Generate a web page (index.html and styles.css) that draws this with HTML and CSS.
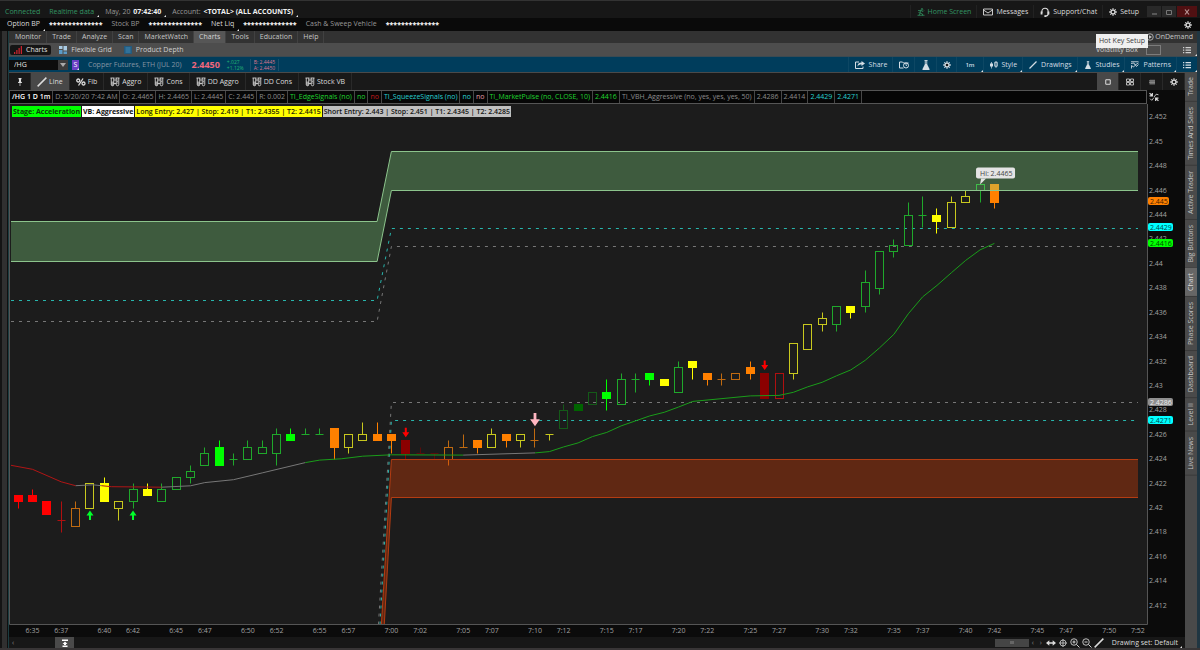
FILE: index.html
```html
<!DOCTYPE html>
<html lang="en">
<head>
    <meta charset="UTF-8">
    <meta name="viewport" content="width=device-width, initial-scale=1.0">
    <title>Charts - /HG</title>
    <link rel="stylesheet" href="styles.css">
</head>
<body>
    <!-- shared icons -->
    <svg class="sprite" aria-hidden="true">
        <symbol id="i-gear" viewBox="0 0 16 16">
            <g stroke="currentColor" stroke-width="2.6"><path d="M8 0.5v15M0.5 8h15M2.7 2.7l10.6 10.6M13.3 2.7L2.7 13.3"/></g>
            <circle cx="8" cy="8" r="4.6" fill="currentColor"/>
            <circle cx="8" cy="8" r="2.6" class="hole"/>
        </symbol>
        <symbol id="i-home" viewBox="0 0 16 16">
            <g fill="none" stroke="currentColor" stroke-width="1.5"><circle cx="10" cy="2.5" r="1.6"/><path d="M2 5h6l4 2 2-2M8 5l-2 5 5 2v3M6 10l-2 5M3 9l3-1M1 14.5h14"/></g>
        </symbol>
        <symbol id="i-mail" viewBox="0 0 20 14">
            <path d="M1 1h18v12H1zM1 3l9 6 9-6" fill="none" stroke="currentColor" stroke-width="1.8"/>
        </symbol>
        <symbol id="i-headset" viewBox="0 0 16 16">
            <path d="M3 9V7a5 5 0 0 1 10 0v4c0 2-1 3-4 3.5" fill="none" stroke="currentColor" stroke-width="1.8"/>
            <path d="M1 7h3v5H1zM12 7h3v5h-3zM7 13h3v3H7z" fill="currentColor"/>
        </symbol>
        <symbol id="i-list" viewBox="0 0 16 14">
            <path d="M0 1h2.5v2.4H0zM5 1h11v2.4H5zM0 6h2.5v2.4H0zM5 6h11v2.4H5zM0 11h2.5v2.4H0zM5 11h11v2.4H5z" fill="currentColor"/>
        </symbol>
        <symbol id="i-share" viewBox="0 0 20 16">
            <path d="M8 2H1v13h15v-4" fill="none" stroke="currentColor" stroke-width="2"/>
            <path d="M13 0l7 5-7 5V7C9 7 7 8 5 11c0-5 3-8 8-8z" fill="currentColor"/>
        </symbol>
        <symbol id="i-event" viewBox="0 0 20 16">
            <path d="M9 14H1V2h6l2 2h10" fill="none" stroke="currentColor" stroke-width="2"/>
            <circle cx="14" cy="9" r="5" fill="none" stroke="currentColor" stroke-width="2"/>
            <path d="M14 6v3h2" fill="none" stroke="currentColor" stroke-width="1.6"/>
        </symbol>
        <symbol id="i-flask" viewBox="0 0 16 20">
            <path d="M5 1h6M6.5 1v8M9.5 1v8" fill="none" stroke="currentColor" stroke-width="1.8"/>
            <path d="M6 8h4l5 10v2H1v-2z" fill="currentColor"/>
        </symbol>
        <symbol id="i-candles" viewBox="0 0 16 16">
            <path d="M3 2v13M12 0v14" stroke="currentColor" stroke-width="1.4"/>
            <path d="M0 5h6v6H0z" fill="currentColor"/>
            <path d="M9.5 2.5h5v8h-5z" fill="none" stroke="currentColor" stroke-width="1.8"/>
        </symbol>
        <symbol id="i-pen" viewBox="0 0 16 16">
            <path d="M1 15L15 1" stroke="currentColor" stroke-width="2.4"/>
        </symbol>
        <symbol id="i-pattern" viewBox="0 0 16 16">
            <path d="M0 1.5h15M0 5l6-1 2 4 7-4M1 15V9l4 3 4-4 2 3 4-4" fill="none" stroke="currentColor" stroke-width="1.7"/>
        </symbol>
        <symbol id="i-tubes" viewBox="0 0 20 20">
            <path d="M1 2h8M11 2h8M2.5 2v13a2.5 2.5 0 0 0 5 0V2M12.5 2v13a2.5 2.5 0 0 0 5 0V2M7.5 6h5M7.5 13h5" fill="none" stroke="currentColor" stroke-width="1.7"/>
            <path d="M2.5 9h5v6a2.5 2.5 0 0 1-5 0z" fill="currentColor" opacity=".6"/>
            <path d="M14 6h2M14 9h2M14 12h2" stroke="currentColor" stroke-width="1.4"/>
        </symbol>
        <symbol id="i-pin" viewBox="0 0 12 16">
            <path d="M3 0h6v2L8 3v4l2 2v1H2V9l2-2V3L3 2zM5.3 10h1.4v6H5.3z" fill="currentColor"/>
        </symbol>
        <symbol id="i-square" viewBox="0 0 12 12">
            <path d="M1.5 1.5h9v9h-9z" fill="none" stroke="currentColor" stroke-width="2"/>
        </symbol>
        <symbol id="i-grid" viewBox="0 0 16 14">
            <path d="M1 1h6v5H1zM9 1h6v5H9zM1 8h6v5H1zM9 8h6v5H9z" fill="none" stroke="currentColor" stroke-width="1.6"/>
        </symbol>
        <symbol id="i-lines" viewBox="0 0 12 12">
            <path d="M0 11V4l3-2v9M5 11V2h2v9M9 11V2h2v9M0 7h12" fill="none" stroke="currentColor" stroke-width="1.5"/>
        </symbol>
        <symbol id="i-percent" viewBox="0 0 20 16">
            <circle cx="4.5" cy="5" r="3" fill="none" stroke="currentColor" stroke-width="2.6"/>
            <circle cx="15" cy="11" r="3" fill="none" stroke="currentColor" stroke-width="2.6"/>
            <path d="M5 15L14 1" stroke="currentColor" stroke-width="2.6"/>
        </symbol>
        <symbol id="i-bars" viewBox="0 0 16 16">
            <path d="M0 12h2.5v4H0zM4.5 8H7v8H4.5zM9 4h2.5v12H9zM13.5 0H16v16h-2.5z" fill="#c9242f"/>
        </symbol>
        <symbol id="i-flex" viewBox="0 0 16 16">
            <path d="M0 0h7v6H0zM9 0h7v9H9z" fill="#a9cbe3"/>
            <path d="M0 8h7v8H0zM9 11h7v5H9z" fill="#5b9bc8"/>
        </symbol>
        <symbol id="i-depth" viewBox="0 0 16 16">
            <path d="M0 0h16v16H0z" fill="#245a7d"/>
            <path d="M3 4h10M3 8h10M3 12h10" stroke="#3f8ab8" stroke-width="2"/>
        </symbol>
        <symbol id="i-ondemand" viewBox="0 0 16 16">
            <circle cx="8" cy="8" r="6.5" fill="none" stroke="currentColor" stroke-width="1.6"/>
            <path d="M6 4.5l6 3.5-6 3.5z" fill="currentColor"/>
        </symbol>
        <symbol id="i-fit" viewBox="0 0 18 16">
            <path d="M1 1l5 5M6 1v5H1M17 15l-5-5M12 15v-5h5" fill="none" stroke="currentColor" stroke-width="2.2"/>
            <path d="M9 8l4-5 4 1M2 11l3 3 4-5" fill="none" stroke="currentColor" stroke-width="1.5"/>
        </symbol>
        <symbol id="i-expand" viewBox="0 0 18 12">
            <path d="M0 6l6-5v3.5h6V1l6 5-6 5V7.5H6V11z" fill="currentColor"/>
        </symbol>
        <symbol id="i-cross" viewBox="0 0 16 16">
            <path d="M8 0v16M0 8h16" stroke="currentColor" stroke-width="1.5"/>
            <circle cx="8" cy="8" r="6" fill="none" stroke="currentColor" stroke-width="1.5"/>
        </symbol>
        <symbol id="i-zoomin" viewBox="0 0 20 20">
            <circle cx="8" cy="8" r="6.5" fill="none" stroke="currentColor" stroke-width="1.7"/>
            <path d="M13 13l6 6M5 8h6M8 5v6" stroke="currentColor" stroke-width="1.9"/>
        </symbol>
        <symbol id="i-zoomout" viewBox="0 0 20 20">
            <circle cx="8" cy="8" r="6.5" fill="none" stroke="currentColor" stroke-width="1.7"/>
            <path d="M13 13l6 6M5 8h6" stroke="currentColor" stroke-width="1.9"/>
        </symbol>
        <symbol id="i-collapse" viewBox="0 0 14 16">
            <path d="M1 1h12v3H1zM7 5l5 5H9v2H5v-2H2zM2 13h10v3H2z" fill="currentColor"/>
        </symbol>
    </svg>

    <div class="app">
        <header class="topbar">
            <span class="online">Connected</span>
            <span class="online corner">Realtime data</span>
            <span class="corner dim">May, 20 <b>07:42:40</b></span>
            <span class="corner dim">Account: <b>&lt;TOTAL&gt; (ALL ACCOUNTS)</b></span>
            <div class="top-actions">
                <button class="online"><svg class="icon"><use href="#i-home"/></svg>Home Screen</button>
                <button><svg class="icon wide"><use href="#i-mail"/></svg>Messages</button>
                <button><svg class="icon wide"><use href="#i-headset"/></svg>Support/Chat</button>
                <button><svg class="icon"><use href="#i-gear"/></svg>Setup</button>
            </div>
            <div class="window-buttons">
                <button aria-label="Minimize"><svg viewBox="0 0 8 8"><path d="M2 6h5" stroke="#888"/></svg></button>
                <button aria-label="Maximize"><svg viewBox="0 0 8 8"><path d="M1.5 2.5h5v4h-5z" fill="none" stroke="#777"/></svg></button>
                <button class="close" aria-label="Close"><svg viewBox="0 0 8 8"><path d="M2 1.5l4 5M6 1.5l-4 5" stroke="#b99" stroke-width="1.2"/></svg></button>
            </div>
        </header>

        <div class="balances">
            <div class="balance"><span class="corner">Option BP</span><b>**************</b></div>
            <div class="balance"><span class="dim">Stock BP</span><b>**************</b></div>
            <div class="balance"><span class="corner">Net Liq</span><b>**************</b></div>
            <div class="balance"><span class="dim">Cash &amp; Sweep Vehicle</span><b>**************</b></div>
            <button class="balance-setup" aria-label="Account settings"><svg class="icon"><use href="#i-gear"/></svg></button>
        </div>

        <div class="body">
            <div class="gutter"></div>
            <main class="main">
                <nav class="tabs">
                    <button>Monitor</button>
                    <button>Trade</button>
                    <button>Analyze</button>
                    <button>Scan</button>
                    <button>MarketWatch</button>
                    <button class="active">Charts</button>
                    <button>Tools</button>
                    <button>Education</button>
                    <button>Help</button>
                    <button class="ondemand"><svg class="icon"><use href="#i-ondemand"/></svg>OnDemand</button>
                </nav>

                <div class="subtabs">
                    <button class="active"><svg class="icon"><use href="#i-bars"/></svg>Charts</button>
                    <button><svg class="icon"><use href="#i-flex"/></svg>Flexible Grid</button>
                    <button><svg class="icon"><use href="#i-depth"/></svg>Product Depth</button>
                    <div class="volbox">
                        <span>Volatility Box</span>
                        <i class="volbox-field"></i>
                        <button class="corner" aria-label="Layouts"><svg class="icon"><use href="#i-list"/></svg></button>
                        <div class="tooltip" role="tooltip">Hot Key Setup</div>
                    </div>
                </div>

                <div class="symbolbar">
                    <div class="combo">
                        <input type="text" value="/HG" aria-label="Symbol">
                        <button aria-label="Symbol list"><svg viewBox="0 0 8 8"><path d="M1 2h6L4 6z" fill="#aaa"/></svg></button>
                    </div>
                    <button class="link corner">S</button>
                    <span class="desc">Copper Futures, ETH (JUL 20)</span>
                    <span class="last">2.4450</span>
                    <span class="change up"><span>+.027</span><span>+1.12%</span></span>
                    <span class="change quote"><span>B: 2.4445</span><span>A: 2.4450</span></span>
                    <div class="symbol-actions">
                        <button><svg class="icon wide"><use href="#i-share"/></svg>Share</button>
                        <button aria-label="Events"><svg class="icon wide"><use href="#i-event"/></svg></button>
                        <button aria-label="Studies list"><svg class="icon wide"><use href="#i-flask"/></svg></button>
                        <button aria-label="Chart settings"><svg class="icon"><use href="#i-gear"/></svg></button>
                        <button class="corner period">1m</button>
                        <button class="corner"><svg class="icon"><use href="#i-candles"/></svg>Style</button>
                        <button class="corner"><svg class="icon"><use href="#i-pen"/></svg>Drawings</button>
                        <button class="corner"><svg class="icon"><use href="#i-flask"/></svg>Studies</button>
                        <button class="corner"><svg class="icon"><use href="#i-pattern"/></svg>Patterns</button>
                        <button class="corner more" aria-label="More"><svg class="icon"><use href="#i-list"/></svg></button>
                    </div>
                </div>

                <div class="workspace">
                    <section class="panel">
                        <div class="drawbar">
                            <button class="square" aria-label="Pin"><svg class="icon"><use href="#i-pin"/></svg></button>
                            <button class="active"><svg class="icon wide"><use href="#i-pen"/></svg>Line</button>
                            <button><svg class="icon wide"><use href="#i-percent"/></svg>Fib</button>
                            <button><svg class="icon wide"><use href="#i-tubes"/></svg>Aggro</button>
                            <button><svg class="icon wide"><use href="#i-tubes"/></svg>Cons</button>
                            <button><svg class="icon wide"><use href="#i-tubes"/></svg>DD Aggro</button>
                            <button><svg class="icon wide"><use href="#i-tubes"/></svg>DD Cons</button>
                            <button><svg class="icon wide"><use href="#i-tubes"/></svg>Stock VB</button>
                            <div class="draw-right">
                                <button class="square active" aria-label="Single"><svg class="icon small"><use href="#i-square"/></svg></button>
                                <button class="square" aria-label="Grid"><svg class="icon"><use href="#i-grid"/></svg></button>
                                <button class="square faint" aria-label="Compare"><svg class="icon small"><use href="#i-lines"/></svg></button>
                                <button class="square" aria-label="Settings"><svg class="icon"><use href="#i-gear"/></svg></button>
                            </div>
                        </div>

                        <div class="status">
                            <div class="status-cells">
                                <span class="title">/HG 1 D 1m</span>
                                <span>D: 5/20/20 7:42 AM</span>
                                <span>O: 2.4465</span>
                                <span>H: 2.4465</span>
                                <span>L: 2.4445</span>
                                <span>C: 2.445</span>
                                <span>R: 0.002</span>
                                <span class="green">TI_EdgeSignals (no)</span>
                                <span class="green">no</span>
                                <span class="red">no</span>
                                <span class="cyan">TI_SqueezeSignals (no)</span>
                                <span class="cyan">no</span>
                                <span class="pink">no</span>
                                <span class="green">TI_MarketPulse (no, CLOSE, 10)</span>
                                <span class="green">2.4416</span>
                                <span>TI_VBH_Aggressive (no, yes, yes, yes, 50)</span>
                                <span>2.4286</span>
                                <span>2.4414</span>
                                <span class="cyan">2.4429</span>
                                <span class="cyan">2.4271</span>
                            </div>
                            <button class="fit" aria-label="Fit chart"><svg class="icon wide"><use href="#i-fit"/></svg></button>
                        </div>

                        <div class="chart">
                            <svg id="chart" role="img" aria-label="/HG one minute candles"></svg>
                            <div class="labels">
                                <span class="lime">Stage: Acceleration</span>
                                <span class="white">VB: Aggressive</span>
                                <span class="yellow">Long Entry: 2.427 | Stop: 2.419 | T1: 2.4355 | T2: 2.4415</span>
                                <span class="gray">Short Entry: 2.443 | Stop: 2.451 | T1: 2.4345 | T2: 2.4285</span>
                            </div>
                        </div>

                        <footer class="bottombar">
                            <button class="step" aria-label="Scroll to start">‹</button>
                            <button class="toggle" aria-label="Collapse"><svg class="icon"><use href="#i-collapse"/></svg></button>
                            <div class="thumb"><i></i></div>
                            <button class="step" aria-label="Scroll left">‹</button>
                            <button class="step" aria-label="Scroll right">›</button>
                            <button class="tool" aria-label="Expand"><svg class="icon wide"><use href="#i-expand"/></svg></button>
                            <button class="tool" aria-label="Crosshair"><svg class="icon"><use href="#i-cross"/></svg></button>
                            <button class="tool" aria-label="Zoom in"><svg class="icon wide"><use href="#i-zoomin"/></svg></button>
                            <button class="tool" aria-label="Zoom out"><svg class="icon wide"><use href="#i-zoomout"/></svg></button>
                            <button class="tool" aria-label="Draw"><svg class="icon wide"><use href="#i-pen"/></svg></button>
                            <button class="drawing-set corner">Drawing set: Default</button>
                        </footer>
                    </section>

                    <aside class="sidetabs">
                        <button>Trade</button>
                        <button>Times And Sales</button>
                        <button>Active Trader</button>
                        <button>Big Buttons</button>
                        <button class="active">Chart</button>
                        <button>Phase Scores</button>
                        <button>Dashboard</button>
                        <button>Level II</button>
                        <button>Live News</button>
                    </aside>
                </div>
            </main>
        </div>
    </div>
    <script src="chart.js"></script>
</body>
</html>
```
FILE: styles.css
```css
* {
    box-sizing: border-box;
}
body {
    margin: 0;
    font-family: "Open Sans", "Noto Sans", sans-serif;
    font-size: 7px;
    line-height: 10px;
    background: #0a0a0a;
    color: #dcdcdc;
}
button, input {
    font: inherit;
    color: inherit;
    background: none;
    border: none;
    margin: 0;
    padding: 0;
}
button {
    display: flex;
    align-items: center;
    gap: 4px;
    white-space: nowrap;
    cursor: pointer;
}
.sprite {
    position: absolute;
    width: 0;
    height: 0;
}
.icon {
    width: 8px;
    height: 8px;
    flex: none;
}
.icon.wide {
    width: 10px;
    height: 10px;
}
.icon.small {
    width: 6px;
    height: 6px;
}
.hole {
    fill: #171717;
}

/* little white corner on everything that opens a menu */
.corner {
    position: relative;
}
.corner::after {
    content: "";
    position: absolute;
    right: 0;
    bottom: 0;
    border-left: 2px solid transparent;
    border-bottom: 2px solid #e8e8e8;
}
.dim {
    color: #979797;
}
.online {
    color: #339563;
}

.app {
    display: flex;
    flex-direction: column;
    height: 100vh;
    border-top: 1px solid #333;
    border-bottom: 2px solid #383536;
}

/* top bar */
.topbar {
    display: flex;
    align-items: center;
    height: 17px;
    padding: 4px 3px 0 5px;
    gap: 9px;
    background: #171717;
    white-space: nowrap;
}
.topbar b {
    color: #f2f2f2;
    margin-left: 1px;
}
.topbar .corner {
    padding-right: 5px;
    margin-right: -3px;
}
.top-actions {
    display: flex;
    margin-left: auto;
}
.top-actions button {
    height: 13px;
    padding: 0 5px 0 6px;
    gap: 3px;
    border-left: 1px solid #222;
}
.window-buttons {
    display: flex;
    gap: 1px;
    margin-left: -6px;
}
.window-buttons button {
    justify-content: center;
    width: 14px;
    height: 11px;
    background: #292929;
}
.window-buttons svg {
    width: 8px;
    height: 8px;
}
.window-buttons .close {
    width: 20px;
    background: #501012;
}

/* balances */
.balances {
    display: flex;
    align-items: center;
    height: 13px;
    padding: 0 8px 0 7px;
    gap: 9px;
    background: #0a0a0a;
    white-space: nowrap;
}
.balance {
    display: flex;
    gap: 9px;
}
.balance .corner {
    padding-right: 5px;
    margin-right: -5px;
}
.balance b {
    color: #fff;
    line-height: 12px;
}
.balance-setup {
    margin-left: auto;
}

.body {
    display: flex;
    flex: 1;
    min-height: 0;
}
.gutter {
    width: 8px;
    background: #303030;
    border-left: 2px solid #141414;
    border-right: 1px solid #101010;
}
.main {
    display: flex;
    flex-direction: column;
    flex: 1;
    min-width: 0;
    border-left: 1px solid #1b3c40;
    border-right: 3px solid #203642;
}

/* main tabs */
.tabs {
    display: flex;
    height: 12px;
    padding-left: 1px;
    background: #323232;
    color: #c6c6c6;
}
.tabs button {
    padding: 0 5px;
    border-right: 1px solid #414141;
}
.tabs .active {
    background: #565656;
    color: #d4d4d4;
}
.tabs .ondemand {
    margin-left: auto;
    padding: 0 4px;
    gap: 1px;
    border: none;
}
.subtabs {
    display: flex;
    align-items: center;
    height: 14px;
    padding-left: 1px;
    background: #4d4d4d;
    color: #d0d0d0;
    border-bottom: 1px solid #3b4a52;
}
.subtabs > button {
    height: 10px;
    padding: 0 4px;
    margin-right: 4px;
}
.subtabs .active {
    background: #151515;
    color: #e0e0e0;
    border-radius: 2px;
}
.volbox {
    position: relative;
    display: flex;
    align-items: center;
    gap: 8px;
    margin-left: auto;
}
.volbox-field {
    width: 15px;
    height: 10px;
    border: 1px solid #7c7c7c;
}
.volbox .corner {
    height: 12px;
    margin-left: 14px;
    padding-right: 6px;
}
.tooltip {
    position: absolute;
    right: 49px;
    bottom: 8px;
    padding: 2px 3px;
    background: #f0f0f0;
    color: #3c3c3c;
    white-space: nowrap;
}

/* symbol bar */
.symbolbar {
    display: flex;
    align-items: center;
    height: 15px;
    background: #003d5c;
    white-space: nowrap;
}
.symbolbar .hole {
    fill: #003d5c;
}
.combo {
    display: flex;
    width: 59px;
    height: 10px;
    background: #0d0d0d;
}
.combo input {
    flex: 1;
    width: 0;
    padding: 0 5px;
    color: #e6e6e6;
}
.combo button {
    justify-content: center;
    width: 10px;
    background: #3c3c3c;
}
.combo svg {
    width: 8px;
    height: 8px;
}
.link {
    width: 7px;
    height: 10px;
    margin: 0 9px 0 4px;
    justify-content: center;
    background: #6b3fc4;
    color: #fff;
}
.desc {
    color: #8595a3;
}
.last {
    margin: 0 7px 0 10px;
    color: #f0677d;
    font-size: 9px;
    font-weight: bold;
}
.change {
    display: flex;
    flex-direction: column;
    height: 12px;
    padding-right: 6px;
    font-size: 5px;
    line-height: 6px;
}
.up {
    color: #20b575;
}
.quote {
    padding: 0 3px;
    color: #dc7690;
    border-left: 1px solid #1a4f6b;
    border-right: 1px solid #1a4f6b;
}
.symbol-actions {
    display: flex;
    height: 15px;
    margin-left: auto;
    color: #d3dde4;
}
.symbol-actions button {
    padding: 0 5px 0 6px;
    border-left: 1px solid #0d4764;
}
.symbol-actions .period {
    padding: 0 8px;
    font-size: 6px;
    font-weight: 600;
}
.symbol-actions .more {
    padding: 0 6px;
}

.workspace {
    display: flex;
    flex: 1;
    min-height: 0;
}
.panel {
    display: flex;
    flex-direction: column;
    flex: 1;
    min-width: 0;
    background: #0b0b0b;
    border-top: 1px solid #4a4a4a;
}

/* drawing tools */
.drawbar {
    display: flex;
    height: 17px;
    background: #191919;
}
.drawbar button {
    padding: 0 6px;
    gap: 2px;
    border-right: 1px solid #292929;
}
.drawbar .square {
    justify-content: center;
    width: 22px;
    padding: 0;
}
.drawbar .active {
    background: #484848;
}
.drawbar .faint {
    color: #8c8c8c;
}
.draw-right {
    display: flex;
    margin-left: auto;
}

/* study status line */
.status {
    display: flex;
    height: 14px;
    white-space: nowrap;
}
.status-cells {
    display: flex;
    flex: 1;
    min-width: 0;
    border: 1px solid #555;
    background: #060606;
    color: #8c8c8c;
}
.status-cells span {
    padding: 1px 2px;
    border-right: 1px solid #474747;
}
.status-cells .title {
    color: #fff;
    font-weight: 600;
}
.status-cells .green {
    color: #1fd42f;
}
.status-cells .red {
    color: #c01a1a;
}
.status-cells .cyan {
    color: #26d0d0;
}
.status-cells .pink {
    color: #e09ca4;
}
.fit {
    width: 38px;
    padding-left: 2px;
}

/* chart */
.chart {
    position: relative;
    flex: 1;
    min-height: 0;
}
.chart > svg {
    display: block;
    width: 100%;
    height: 100%;
}
.labels {
    position: absolute;
    top: 2px;
    left: 3px;
    display: flex;
    gap: 1px;
    font-weight: bold;
    white-space: nowrap;
}
.labels span {
    padding: 0 1px;
    line-height: 11px;
}
.lime {
    background: #00ff00;
    color: #0a3a0a;
}
.white {
    background: #fff;
    color: #111;
}
.labels .yellow, .labels .gray {
    font-weight: 600;
}
.yellow {
    background: #ffff00;
    color: #1c1c00;
}
.gray {
    background: #c0c0c0;
    color: #141414;
}
.plot-bg {
    fill: #1c1c1c;
}
.frame {
    fill: none;
    stroke: #555;
}
.axis-text {
    fill: #a2a2a2;
}
.time-text {
    fill: #a2a2a2;
    text-anchor: middle;
}
.upper {
    fill: #90ee90;
    fill-opacity: 0.3;
}
.lower {
    fill: #ff4500;
    fill-opacity: 0.3;
}
.upper-line {
    fill: none;
    stroke: #8cc48c;
}
.lower-line {
    fill: none;
    stroke: #b43c12;
}
.dash {
    fill: none;
    stroke-dasharray: 3 5;
}
.dash-cyan {
    stroke: #27b5ac;
}
.dash-gray {
    stroke: #777;
}
.average {
    fill: none;
    stroke-width: 1;
}

/* bottom bar */
.bottombar {
    display: flex;
    align-items: center;
    height: 11px;
    padding: 0 3px 0 0;
    background: #171717;
}
.step {
    width: 8px;
    justify-content: center;
    color: #888;
}
.toggle {
    width: 19px;
    height: 11px;
    margin-left: 38px;
    justify-content: center;
    background: #4a4a4a;
    color: #fff;
}
.thumb {
    display: flex;
    justify-content: center;
    align-items: center;
    width: 34px;
    height: 8px;
    margin-left: auto;
    background: #454545;
}
.thumb i {
    width: 4px;
    height: 3px;
    background: #666;
}
.tool {
    width: 12px;
    justify-content: center;
}
.drawing-set {
    margin-left: 7px;
    padding-right: 4px;
}

/* side tabs */
.sidetabs {
    width: 12px;
    background: #4a4a4a;
    color: #c4c4c4;
}
.sidetabs button {
    width: 12px;
    padding: 5px 0;
    writing-mode: vertical-rl;
    transform: rotate(180deg);
    border-top: 1px solid #3a3a3a;
}
.sidetabs .active {
    background: #666;
    color: #d8d8d8;
}
```
FILE: chart.js
```javascript
const svg = document.getElementById('chart');
const AXIS_W = 38;
const TIME_H = 13;

const COLORS = {
    r: '#ff0000', R: '#b01010', o: '#ff8000', O: '#c06a10',
    y: '#ffff00', Y: '#c8c81e', g: '#00ff00', G: '#1fa82b',
    d: '#8b0000', D: '#5a0c0c', m: '#006400', M: '#145a18'
};

// minute from 7:00, then high, body top, body bottom, low in ticks under 2.4465, colour, filled
const candles = [
    [-26, 51, 51, 52, 53, 'r', 1], [-25, 50, 51, 52, 52, 'r', 1], [-24, 52, 52, 54, 54, 'r', 1],
    [-23, 52, 55, 55, 57, 'R', 0], [-22, 52, 53, 56, 56, 'O', 0], [-21, 49, 49, 53, 53, 'Y', 0],
    [-20, 48, 49, 52, 52, 'y', 1], [-19, 52, 52, 53, 55, 'Y', 0], [-18, 49, 50, 52, 53, 'G', 0],
    [-17, 49, 50, 51, 51, 'y', 1], [-16, 49, 50, 52, 52, 'G', 0], [-15, 48, 48, 50, 50, 'G', 0],
    [-14, 46, 47, 48, 49, 'G', 0], [-13, 43, 44, 46, 46, 'G', 0], [-12, 42, 43, 46, 46, 'g', 1],
    [-11, 44, 45, 45, 46, 'G', 0], [-10, 42, 43, 45, 45, 'G', 0], [-9, 42, 43, 44, 44, 'G', 0],
    [-8, 40, 41, 44, 46, 'G', 0], [-7, 40, 41, 42, 42, 'g', 1], [-6, 40, 41, 41, 41, 'G', 0],
    [-5, 40, 41, 41, 41, 'G', 0], [-4, 40, 40, 43, 45, 'o', 1], [-3, 41, 41, 43, 44, 'Y', 0],
    [-2, 39, 41, 42, 42, 'Y', 0], [-1, 39, 41, 42, 42, 'o', 1], [0, 41, 41, 42, 44, 'o', 1],
    [1, 42, 42, 44, 45, 'd', 1], [2, 43, 44, 44, 44, 'D', 0], [3, 44, 44, 44, 45, 'D', 0],
    [4, 42, 43, 45, 46, 'O', 0], [5, 41, 43, 43, 43, 'O', 0], [6, 42, 42, 43, 44, 'o', 1],
    [7, 40, 41, 43, 43, 'Y', 0], [8, 41, 41, 42, 43, 'o', 1], [9, 41, 41, 42, 43, 'Y', 0],
    [10, 40, 42, 42, 43, 'O', 0], [11, 41, 41, 41, 42, 'Y', 0], [12, 36, 37, 40, 40, 'M', 0],
    [13, 36, 36, 37, 37, 'm', 1], [14, 34, 34, 36, 36, 'M', 0], [15, 32, 34, 35, 37, 'g', 1],
    [16, 31, 32, 36, 36, 'G', 0], [17, 31, 32, 32, 34, 'G', 0], [18, 31, 31, 32, 33, 'g', 1],
    [19, 32, 32, 33, 33, 'y', 1], [20, 29, 30, 34, 34, 'G', 0], [21, 29, 29, 30, 32, 'y', 1],
    [22, 31, 31, 32, 33, 'o', 1], [23, 31, 32, 32, 33, 'O', 0], [24, 31, 31, 32, 32, 'O', 0],
    [25, 29, 30, 31, 32, 'o', 1], [26, 31, 31, 35, 35, 'd', 1], [27, 31, 31, 35, 35, 'R', 0],
    [28, 26, 26, 31, 32, 'Y', 0], [29, 23, 23, 27, 27, 'Y', 0], [30, 21, 22, 23, 24, 'Y', 0],
    [31, 20, 20, 23, 24, 'G', 0], [32, 20, 20, 21, 22, 'y', 1], [33, 14, 16, 20, 21, 'G', 0],
    [34, 11, 11, 17, 18, 'G', 0], [35, 9, 10, 11, 12, 'G', 0], [36, 3, 5, 10, 10, 'G', 0],
    [37, 2, 5, 5, 7, 'G', 0], [38, 4, 5, 6, 8, 'y', 1], [39, 2, 3, 7, 7, 'Y', 0],
    [40, 1, 2, 3, 3, 'Y', 0], [41, 0, 0, 1, 3, 'G', 0], [42, 0, 0, 3, 4, 'o', 1]
];

// moving average, one run per colour: [minute, price]
const average = [
    ['#b01515', [[-26.5, 2.4235], [-25, 2.42317], [-23, 2.42215], [-22, 2.42183]]],
    ['#777', [[-22, 2.42183], [-20.8, 2.4219], [-20.2, 2.42183]]],
    ['#b01515', [[-20.2, 2.42183], [-19.5, 2.42175], [-16, 2.42171]]],
    ['#777', [[-16, 2.42171], [-14, 2.42182], [-13, 2.42208], [-11, 2.42232], [-9, 2.42288], [-6, 2.42372]]],
    ['#1a9c1a', [[-6, 2.42372], [-5, 2.42393], [-3.5, 2.42403], [-2, 2.42425], [0, 2.42436], [5, 2.42434]]],
    ['#777', [[5, 2.42434], [10, 2.42452]]],
    ['#1a9c1a', [[10, 2.42452], [11, 2.42462], [12, 2.42501], [13, 2.42534], [14, 2.42585], [15, 2.4262],
        [16, 2.42673], [17, 2.42714], [18, 2.42755], [19, 2.42784], [20, 2.42828], [21, 2.42874],
        [25, 2.42919], [27, 2.42923], [28, 2.42948], [29, 2.42993], [30, 2.4303], [31, 2.43083],
        [32, 2.43132], [33, 2.4321], [34, 2.43312], [35, 2.43423], [36, 2.43591], [37, 2.4373],
        [38, 2.43824], [39, 2.43927], [40, 2.44029], [41, 2.44115], [42, 2.44168]]]
];

const tags = [
    [2.445, '#ff8000', '#402000'], [2.4429, '#00ffff', '#004848'], [2.4416, '#00ff00', '#004a00'],
    [2.4286, '#8f8f8f', '#eee'], [2.4271, '#00ffff', '#004848']
];

function add(name, attrs, text) {
    const el = document.createElementNS('http://www.w3.org/2000/svg', name);
    for (const key in attrs) el.setAttribute(key, attrs[key]);
    if (text) el.textContent = text;
    svg.appendChild(el);
}

function draw() {
    svg.innerHTML = '';
    const w = svg.clientWidth - AXIS_W;
    const h = svg.clientHeight - TIME_H;
    const x = m => 2 + (m + 26.5) * (w - 1) / 79.2;
    const y = p => (2.4531 - p) * h / 0.0426;
    const tick = n => Math.floor(y(2.4465 - n * 0.0005)) + 0.5;
    const path = pts => 'M' + pts.map(p => x(p[0]).toFixed(1) + ' ' + (Math.floor(y(p[1])) + 0.5)).join('L');

    add('rect', { class: 'plot-bg', x: 0, y: 0, width: w, height: h });

    // expected range lines
    add('path', { class: 'dash dash-cyan', d: path([[-26.5, 2.437], [-1, 2.437], [0, 2.4429], [52, 2.4429]]) });
    add('path', { class: 'dash dash-gray', d: path([[-26.5, 2.4353], [-1, 2.4353], [0, 2.4414], [52, 2.4414]]) });
    add('path', { class: 'dash dash-gray', d: path([[-0.9, 2.4105], [0, 2.42865], [52, 2.42865]]) });
    add('path', { class: 'dash dash-cyan', d: path([[-0.8, 2.4105], [0, 2.42718], [52, 2.42718]]) });

    for (const [m, high, top, bottom, low, c, filled] of candles) {
        const cx = Math.floor(x(m)) + 0.5;
        const color = COLORS[c];
        if (high < top) add('path', { d: `M${cx} ${tick(high)}V${tick(top)}`, stroke: color });
        if (low > bottom) add('path', { d: `M${cx} ${tick(bottom)}V${tick(low)}`, stroke: color });
        if (top === bottom) {
            add('path', { d: `M${cx - 4} ${tick(top)}h8`, stroke: color });
        } else {
            add('rect', {
                x: cx - 4, y: tick(top), width: 8, height: tick(bottom) - tick(top),
                fill: filled ? color : 'none', stroke: color
            });
        }
    }

    for (const [color, pts] of average) {
        const d = 'M' + pts.map(p => x(p[0]).toFixed(1) + ' ' + y(p[1]).toFixed(1)).join('L');
        add('path', { class: 'average', d: d, stroke: color });
    }

    // volatility boxes
    const top = [[-26.5, 2.4435], [-1, 2.4435], [0, 2.4492], [52, 2.4492]];
    const low = [[-26.5, 2.4402], [-1, 2.4402], [0, 2.446], [52, 2.446]];
    add('path', { class: 'upper', d: path(top.concat(low.slice().reverse())) + 'Z' });
    add('path', { class: 'upper-line', d: path(top) });
    add('path', { class: 'upper-line', d: path(low) });
    const top2 = [[-0.7, 2.4105], [0, 2.424], [52, 2.424]];
    const low2 = [[-0.5, 2.4105], [0, 2.4209], [52, 2.4209]];
    add('path', { class: 'lower', d: path(top2.concat(low2.slice().reverse())) + 'Z' });
    add('path', { class: 'lower-line', d: path(top2) });
    add('path', { class: 'lower-line', d: path(low2) });

    // signals: minute, arrow tip price, direction, colour, size
    const arrows = [[-21, 2.4198, -1, '#00ff2a', 1], [-18, 2.4198, -1, '#00ff2a', 1],
        [1, 2.4258, 1, '#ff0000', 1], [26, 2.4313, 1, '#ff0000', 1], [10, 2.4267, 1, '#ffb6c1', 1.4]];
    for (const [m, p, dir, color, s] of arrows) {
        add('path', {
            d: 'M0 0L-3.5 -5H-1V-9.5H1V-5H3.5Z', fill: color,
            transform: `translate(${x(m)} ${y(p)}) scale(${s} ${s * dir})`
        });
    }

    // bubble over the session high
    const bx = x(41), by = y(2.4465);
    add('path', { d: `M${bx} ${by}l1 -6h5z`, fill: '#e4e4e4' });
    add('rect', { x: bx - 4, y: by - 17, width: 39, height: 11, rx: 2, fill: '#e4e4e4' });
    add('text', { x: bx, y: by - 9, fill: '#444' }, 'Hi: 2.4465');

    // axes
    add('path', { class: 'frame', d: `M0.5 0V${h + 0.5}H${w + 0.5}V0` });
    for (let p = 24520; p >= 24120; p -= 20) {
        add('text', { class: 'axis-text', x: w + 2, y: y(p / 10000) + 2 }, String(p / 10000));
    }
    for (const [p, bg, fg] of tags) {
        add('rect', { x: w + 1, y: Math.floor(y(p)) - 5, width: p === 2.445 ? 21 : 25, height: 8, rx: 2, fill: bg });
        add('text', { x: w + 3, y: Math.floor(y(p)) + 2, fill: fg }, String(p));
    }
    for (let m = -25; m <= 52; m++) {
        if (m % 5 !== 0 && ((m % 5) + 5) % 5 !== 2) continue;
        const min = (m + 60) % 60;
        const label = (m < 0 ? '6:' : '7:') + String(min).padStart(2, '0');
        add('text', { class: 'time-text', x: x(m), y: h + 9 }, label);
    }
}

draw();
window.addEventListener('resize', draw);
```
